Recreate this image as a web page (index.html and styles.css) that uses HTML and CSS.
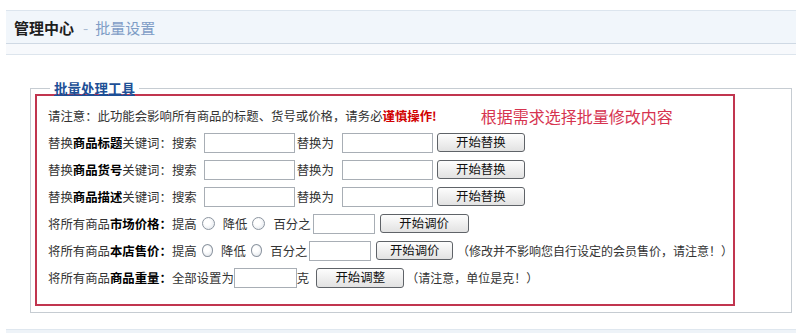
FILE: index.html
```html
<html>
  <head>
    <meta charset="utf-8">
    <title>批量设置</title>

    <link rel="stylesheet" href="styles.css">
  </head>

  <body>
    <div id="header">
      <span class="home">管理中心</span><span class="sep">-</span><span class="page">批量设置</span>
    </div>
    <div id="subbar"></div>

    <fieldset id="tools">
      <legend>批量处理工具</legend>
      <div id="batch">
        <div class="row">
          请注意：此功能会影响所有商品的标题、货号或价格，请务必<b class="warn">谨慎操作!</b>
          <span class="hint">根据需求选择批量修改内容</span>
        </div>
        <div class="row">
          替换<b>商品标题</b>关键词：搜索<input type="text" class="kw" /><span>替换为</span><input type="text" class="kw kw2" /><button class="btn">开始替换</button>
        </div>
        <div class="row">
          替换<b>商品货号</b>关键词：搜索<input type="text" class="kw" /><span>替换为</span><input type="text" class="kw kw2" /><button class="btn">开始替换</button>
        </div>
        <div class="row">
          替换<b>商品描述</b>关键词：搜索<input type="text" class="kw" /><span>替换为</span><input type="text" class="kw kw2" /><button class="btn">开始替换</button>
        </div>
        <div class="row">
          将所有商品<b>市场价格：</b>提高<input type="radio" name="market" class="radio" />降低<input type="radio" name="market" class="radio" />百分之<input type="text" class="pct" /><button class="btn btn2">开始调价</button>
        </div>
        <div class="row">
          将所有商品<b>本店售价：</b>提高<input type="radio" name="shop" class="radio" />降低<input type="radio" name="shop" class="radio" />百分之<input type="text" class="pct" /><button class="btn btn2">开始调价</button><span class="note">（修改并不影响您自行设定的会员售价，请注意！）</span>
        </div>
        <div class="row">
          将所有商品<b>商品重量：</b>全部设置为<input type="text" class="wt" /><span>克</span><button class="btn btn3">开始调整</button><span class="note note2">（请注意，单位是克！）</span>
        </div>
      </div>
    </fieldset>

    <div id="footer"></div>
  </body>
</html>
```

FILE: styles.css
```css
body {
  margin: 0;
  padding: 10px 0 0 6px;
  font-family: "Noto Sans CJK SC", "Liberation Sans", sans-serif;
  font-size: 12.4px;
  color: #333;
  background-color: #fff;
}
#header {
  height: 32px;
  display: flex;
  align-items: center;
  padding-left: 8px;
  background-color: #f1f6fb;
  border-top: 1px solid #dce5ee;
  border-bottom: 1px solid #cfd9e4;
  font-size: 15px;
}
#header .home {
  font-weight: bold;
  color: #1e1e1e;
}
#header .sep {
  color: #aabcd3;
  margin: 0 7px 0 9px;
}
#header .page {
  color: #7f9dc6;
}
#subbar {
  height: 10px;
  background-color: #f7f9fc;
  border-bottom: 1px solid #dde5ed;
}
#tools {
  margin: 27px 4px 0 24px;
  padding: 0 4px 6px 4px;
  border: 1px solid #c6ccd2;
  min-width: 0;
}
#tools legend {
  margin-left: 15px;
  padding: 0 4px;
  font-size: 13.5px;
  line-height: 12px;
  font-weight: bold;
  color: #1d4f96;
  text-decoration: underline;
}
#batch {
  width: 700px;
  box-sizing: border-box;
  border: 2px solid #c1354f;
  padding: 6px 0 13px 11px;
}
.row {
  display: flex;
  align-items: center;
  height: 27px;
  white-space: nowrap;
}
.row b {
  color: #000;
}
.row b.warn {
  color: #d10000;
}
.hint {
  margin-left: 44px;
  font-size: 16px;
  color: #d6334f;
}
.row input[type="text"] {
  height: 20px;
  box-sizing: border-box;
  border: 1px solid #a8aeb5;
  padding: 0;
  background-color: #fff;
}
.kw {
  width: 91px;
  margin: 0 2px 0 7px;
}
.kw2 {
  margin-left: 8px;
}
.pct {
  width: 62px;
  margin: 0 0 0 2px;
}
.wt {
  width: 63px;
  margin: 0;
}
.radio {
  appearance: none;
  width: 13px;
  height: 13px;
  margin: 0 8px 0 5px;
  border: 1px solid #8c95a0;
  border-radius: 50%;
  background: radial-gradient(circle at 40% 40%, #ffffff 30%, #dde2e8 100%);
}
.btn {
  width: 88px;
  height: 19px;
  margin-left: 2px;
  padding: 0 0 1px 0;
  border: 1px solid #5f6368;
  border-radius: 3px;
  background: linear-gradient(#fdfdfd, #e2e2e2);
  font-family: inherit;
  font-size: 12.4px;
  line-height: 16px;
  color: #111;
  cursor: pointer;
}
.btn2 {
  width: 89px;
  margin-left: 5px;
}
.btn3 {
  height: 20px;
  margin-left: 7px;
}
.note {
  margin-left: 4px;
  font-size: 12px;
}
.note2 {
  margin-left: 2px;
}
#footer {
  margin-top: 16px;
  height: 10px;
  background-color: #eef3f8;
  border-top: 1px solid #dfe7ef;
}
```
